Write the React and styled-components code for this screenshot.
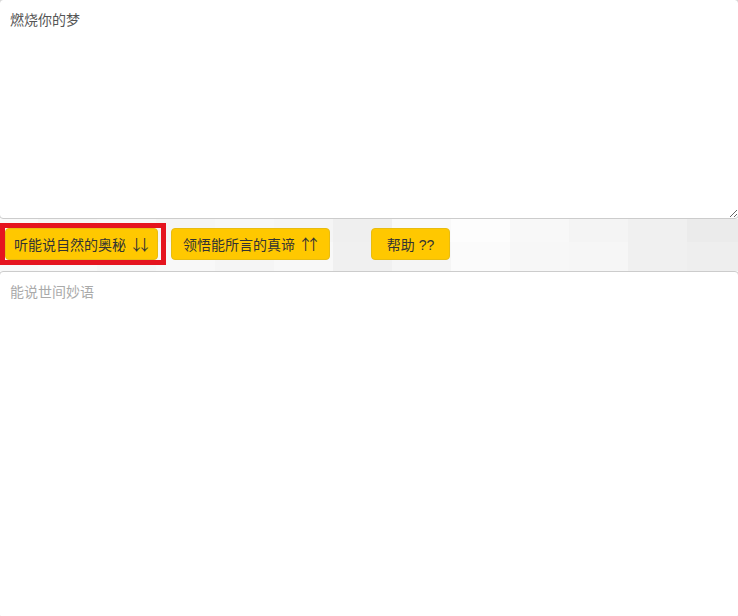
import React from "react";
import styled, { createGlobalStyle } from "styled-components";

const GlobalStyle = createGlobalStyle`
  html, body {
    margin: 0;
    padding: 0;
    overflow: hidden;
    background: #fff;
    font-family: "Liberation Sans", "Noto Sans CJK SC", sans-serif;
  }
`;

const topRow = `linear-gradient(to right,
  #fafafa 0 39px, #f6f6f6 39px 98px, #f8f8f8 98px 157px, #f5f5f5 157px 216px,
  #f7f7f7 216px 275px, #f5f5f5 275px 334px, #efefef 334px 393px, #f9f9f9 393px 452px,
  #fdfdfd 452px 511px, #f8f8f8 511px 570px, #f4f4f4 570px 629px, #f0f0f0 629px 688px,
  #ebebeb 688px 100%)`;

const bottomRow = `linear-gradient(to right,
  #f8f8f8 0 39px, #f9f9f9 39px 98px, #f6f6f6 98px 157px, #f8f8f8 157px 216px,
  #f5f5f5 216px 275px, #f8f8f8 275px 334px, #f0f0f0 334px 393px, #f5f5f5 393px 452px,
  #fbfbfb 452px 511px, #f7f7f7 511px 570px, #f6f6f6 570px 629px, #f0f0f0 629px 688px,
  #eeeeee 688px 100%)`;

const Page = styled.div`
  display: flex;
  flex-direction: column;
  margin: -1px -1px 0;
`;

const Editor = styled.textarea`
  display: block;
  box-sizing: border-box;
  width: 100%;
  height: ${(p) => p.$height}px;
  margin: 0;
  padding: 10px;
  border: 1px solid #cccccc;
  border-radius: 4px;
  background: #fff;
  color: #555;
  font-family: "Liberation Sans", "Noto Sans CJK SC", sans-serif;
  font-size: 14px;
  line-height: 20px;
  outline: none;
  resize: ${(p) => (p.$fixed ? "none" : "both")};

  &::placeholder {
    color: #aaaaaa;
  }
`;

const Toolbar = styled.div`
  display: flex;
  align-items: center;
  gap: 5px;
  height: 52px;
  padding: 0 0 3px 1px;
  box-sizing: border-box;
  background: ${topRow} top left / 100% 23px no-repeat, ${bottomRow} bottom left / 100% 29px no-repeat;
`;

const Highlight = styled.div`
  display: flex;
  border: 5px solid #e5141f;
  padding: 0 3px 0 0;
`;

const Button = styled.button`
  display: flex;
  align-items: center;
  justify-content: center;
  box-sizing: border-box;
  width: ${(p) => p.$width}px;
  height: 32px;
  margin-left: ${(p) => (p.$spaced ? "36px" : "0")};
  padding: 0;
  border: 1px solid #e8bc10;
  border-radius: 4px;
  background: #ffc800;
  color: #333;
  font-family: "Liberation Sans", "Noto Sans CJK SC", sans-serif;
  font-size: 14px;
  white-space: pre;
  cursor: pointer;
`;

const Arrows = styled.span`
  font-family: "Noto Sans CJK SC", sans-serif;
  font-size: 15px;
  letter-spacing: -7px;
  margin-left: -1px;
  margin-right: 4px;
`;

export default function App() {
  return (
    <>
      <GlobalStyle />
      <Page>
        <Editor $height={220} defaultValue="燃烧你的梦" />
        <Toolbar>
          <Highlight>
            <Button $width={153}>
              听能说自然的奥秘 <Arrows>↓↓</Arrows>
            </Button>
          </Highlight>
          <Button $width={159}>
            领悟能所言的真谛 <Arrows>↑↑</Arrows>
          </Button>
          <Button $width={79} $spaced>
            帮助 ??
          </Button>
        </Toolbar>
        <Editor $height={348} $fixed placeholder="能说世间妙语" />
      </Page>
    </>
  );
}
